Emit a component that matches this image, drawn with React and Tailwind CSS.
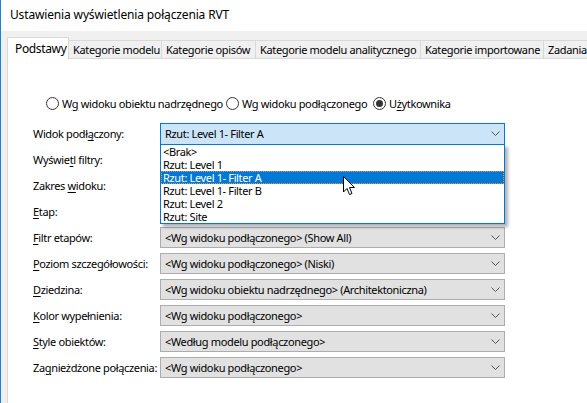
import React from "react";

const rows = [
  { label: "Widok podłączony:", key: 10, value: "Rzut: Level 1- Filter A", open: true },
  { label: "Wyświetl filtry:", key: 6, value: "" },
  { label: "Zakres widoku:", key: 7, value: "" },
  { label: "Etap:", key: 0, value: "" },
  { label: "Filtr etapów:", key: 0, value: "<Wg widoku podłączonego> (Show All)" },
  { label: "Poziom szczegółowości:", key: 0, value: "<Wg widoku podłączonego> (Niski)" },
  { label: "Dziedzina:", key: 0, value: "<Wg widoku obiektu nadrzędnego> (Architektoniczna)" },
  { label: "Kolor wypełnienia:", key: 0, value: "<Wg widoku podłączonego>" },
  { label: "Style obiektów:", key: 0, value: "<Według modelu podłączonego>" },
  { label: "Zagnieżdżone połączenia:", key: 2, value: "<Wg widoku podłączonego>" },
];

const options = [
  "<Brak>",
  "Rzut: Level 1",
  "Rzut: Level 1- Filter A",
  "Rzut: Level 1- Filter B",
  "Rzut: Level 2",
  "Rzut: Site",
];

const tabs = [
  { name: "Podstawy", w: "w-[62px]", active: true },
  { name: "Kategorie modelu", w: "w-[93px]" },
  { name: "Kategorie opisów", w: "w-[94px]" },
  { name: "Kategorie modelu analitycznego", w: "w-[165px]" },
  { name: "Kategorie importowane", w: "w-[123px]" },
  { name: "Zadania", w: "w-[60px]" },
];

// label with an underlined access key
function Acc({ text, at }) {
  return (
    <span>
      {text.slice(0, at)}
      <span className="underline underline-offset-[2px]">{text[at]}</span>
      {text.slice(at + 1)}
    </span>
  );
}

function Chevron() {
  return (
    <svg width="9" height="5" viewBox="0 0 9 5" className="shrink-0">
      <path d="M0.5 0.5 L4.5 4.5 L8.5 0.5" fill="none" stroke="#555" strokeWidth="1" />
    </svg>
  );
}

function Radio({ checked, children, w }) {
  return (
    <div className={`flex items-center gap-[3px] whitespace-nowrap ${w}`}>
      <span className="w-[13px] h-[13px] rounded-full border border-[#333] bg-white flex items-center justify-center shrink-0">
        {checked && <span className="w-[7px] h-[7px] rounded-full bg-[#333]" />}
      </span>
      <span>{children}</span>
    </div>
  );
}

function Cursor() {
  return (
    <svg width="13" height="20" viewBox="0 0 13 20" className="absolute left-[182px] top-[31px]">
      <path
        d="M0.5 0.5 L0.5 16 L4 12.5 L6.5 18.5 L9 17.5 L6.5 11.5 L11.5 11.5 Z"
        fill="white"
        stroke="black"
        strokeWidth="1"
        strokeLinejoin="round"
      />
    </svg>
  );
}

export default function App() {
  return (
    <div className="w-[587px] h-[403px] overflow-hidden flex flex-col bg-white border-l border-[#1883d7] text-[11px] tracking-[-0.35px] text-black font-['Noto_Sans',sans-serif] leading-none">
      {/* TITLE */}
      <div className="h-[31px] shrink-0 flex items-center pl-[9px] pb-[2px] bg-white text-[12px] tracking-[-0.15px]">
        Ustawienia wyświetlenia połączenia RVT
      </div>

      {/* BODY */}
      <div className="flex-1 flex flex-col bg-[#f0f0f0] pl-[6px] pt-[6px]">
        {/* TABS */}
        <div className="flex items-end h-[21px] whitespace-nowrap">
          {tabs.map((t) =>
            t.active ? (
              <div
                key={t.name}
                className={`${t.w} h-[22px] -mb-px relative z-10 bg-white border border-b-0 border-[#d9d9d9] pl-[7px] pt-[5px] shrink-0 text-[12px]`}
              >
                {t.name}
              </div>
            ) : (
              <div
                key={t.name}
                className={`${t.w} h-[18px] border-t border-r border-[#d9d9d9] bg-[#f0f0f0] pl-[4px] pt-[3px] shrink-0 overflow-hidden`}
              >
                {t.name}
              </div>
            )
          )}
        </div>

        {/* PANEL */}
        <div className="flex-1 bg-white border-t border-l border-[#d9d9d9] pl-[25px]">
          <div className="flex items-center h-[16px] mt-[36px] pl-[13px]">
            <Radio w="w-[180px]">
              W<span className="underline underline-offset-[2px]">g</span> widoku obiektu nadrzędnego
            </Radio>
            <Radio w="w-[147px]">
              W<span className="underline underline-offset-[2px]">g</span> widoku podłączonego
            </Radio>
            <Radio checked w="w-[90px]">
              U<span className="underline underline-offset-[2px]">ż</span>ytkownika
            </Radio>
          </div>

          <div className="flex flex-col gap-[5px] mt-[12px]">
            {rows.map((r) => (
              <div key={r.label} className="flex items-center h-[21px]">
                <div className="w-[127px] shrink-0 whitespace-nowrap">
                  <Acc text={r.label} at={r.key} />
                </div>
                {r.open ? (
                  <div className="relative w-[345px] h-[22px] z-20">
                    <div className="h-full flex items-center justify-between bg-[#cce4f7] border border-[#0078d7] pl-[4px] pr-[4px]">
                      <span>{r.value}</span>
                      <Chevron />
                    </div>
                    {/* DROPDOWN */}
                    <div className="absolute left-0 top-[21px] w-[345px] bg-white border border-[#0078d7] shadow-[3px_3px_3px_rgba(0,0,0,0.3)]">
                      {options.map((o) =>
                        o === r.value ? (
                          <div
                            key={o}
                            className="h-[13px] flex items-center pl-[1px] bg-[#0078d7] text-white border border-dotted border-[#e89b3c]"
                          >
                            {o}
                          </div>
                        ) : (
                          <div key={o} className="h-[13px] flex items-center pl-[2px]">
                            {o}
                          </div>
                        )
                      )}
                      <Cursor />
                    </div>
                  </div>
                ) : (
                  <div className="w-[345px] h-[21px] flex items-center justify-between bg-[#e1e1e1] border border-[#adadad] pl-[4px] pr-[4px]">
                    {r.value && <span>{r.value}</span>}
                    <Chevron />
                  </div>
                )}
              </div>
            ))}
          </div>
        </div>
      </div>
    </div>
  );
}
